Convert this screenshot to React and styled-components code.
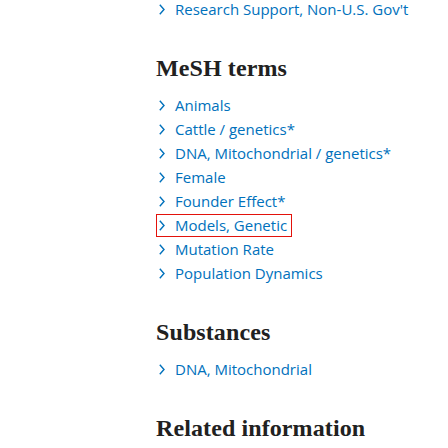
import React from 'react';
import styled, { createGlobalStyle } from 'styled-components';

const GlobalStyle = createGlobalStyle`
  html, body {
    margin: 0;
    padding: 0;
    background: #ffffff;
  }
  body {
    font-family: 'Open Sans', 'Noto Sans', sans-serif;
    overflow: hidden;
  }
`;

const Page = styled.div`
  display: flex;
  flex-direction: column;
  padding: 0 0 0 156px;
  margin-top: -3px;
`;

const Section = styled.section`
  display: flex;
  flex-direction: column;
`;

const Heading = styled.h2`
  margin: 32px 0 10px;
  font-family: 'Liberation Serif', 'DejaVu Serif', serif;
  font-weight: 700;
  font-size: 24px;
  line-height: 30px;
  letter-spacing: 0.1px;
  color: #212121;
`;

const List = styled.ul`
  list-style: none;
  margin: 0;
  padding: 0;
  display: flex;
  flex-direction: column;
`;

const Item = styled.li`
  display: flex;
  align-items: center;
  height: 24px;
`;

const Link = styled.a`
  display: inline-flex;
  align-items: center;
  gap: 10px;
  height: 21px;
  padding: 0 4px 0 2px;
  border: 1px solid ${(p) => (p.$focused ? '#e3120b' : 'transparent')};
  color: #0071bc;
  font-size: 15px;
  line-height: 21px;
  text-decoration: none;
  white-space: nowrap;
  cursor: pointer;
`;

const Chevron = () => (
  <svg width="6" height="11" viewBox="0 0 6 11" fill="none">
    <path d="M0.8 0.8 L5 5.5 L0.8 10.2" stroke="#0071bc" strokeWidth="1.4" />
  </svg>
);

const Entry = ({ children, focused }) => (
  <Item>
    <Link $focused={focused}>
      <Chevron />
      <span>{children}</span>
    </Link>
  </Item>
);

const mesh = [
  'Animals',
  'Cattle / genetics*',
  'DNA, Mitochondrial / genetics*',
  'Female',
  'Founder Effect*',
  'Models, Genetic',
  'Mutation Rate',
  'Population Dynamics',
];

export default function App() {
  return (
    <Page>
      <GlobalStyle />
      <List>
        <Entry>Research Support, Non-U.S. Gov't</Entry>
      </List>
      <Section>
        <Heading>MeSH terms</Heading>
        <List>
          {mesh.map((m) => (
            <Entry key={m} focused={m === 'Models, Genetic'}>
              {m}
            </Entry>
          ))}
        </List>
      </Section>
      <Section>
        <Heading>Substances</Heading>
        <List>
          <Entry>DNA, Mitochondrial</Entry>
        </List>
      </Section>
      <Section>
        <Heading>Related information</Heading>
      </Section>
    </Page>
  );
}
